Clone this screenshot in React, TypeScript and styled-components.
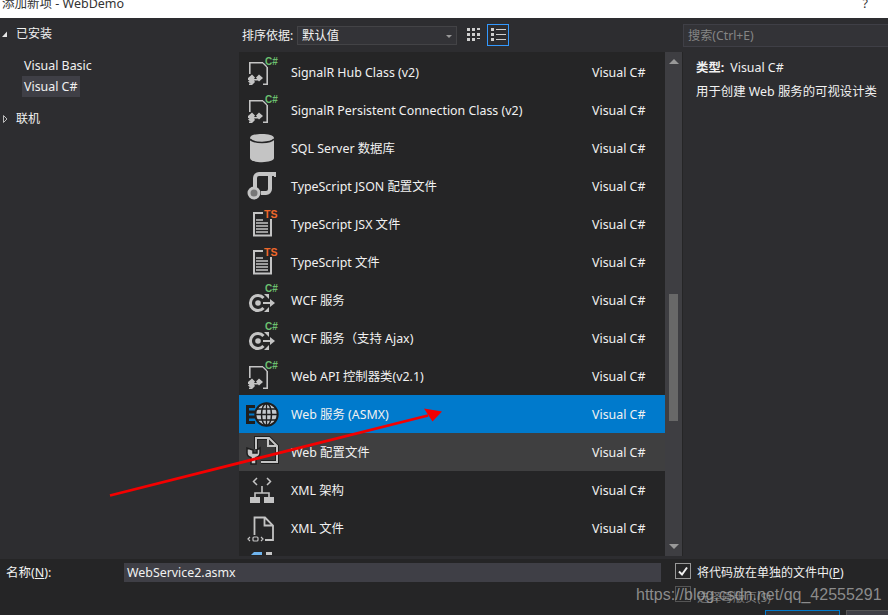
import React from 'react';
import styled, { createGlobalStyle } from 'styled-components';

const GlobalStyle = createGlobalStyle`
	html, body {
		margin: 0;
		padding: 0;
		background: #2d2d30;
		overflow: hidden;
	}
`;

const FONT = `'Noto Sans', 'Noto Sans CJK SC', sans-serif`;

const Dialog = styled.div`
	position: relative;
	width: 888px;
	height: 615px;
	overflow: hidden;
	background: #2d2d30;
	color: #f1f1f1;
	font-family: ${FONT};
	font-size: 12px;
	display: flex;
	flex-direction: column;
`;

const TitleBar = styled.div`
	height: 18px;
	flex: none;
	background: #fff;
	color: #333;
	font-size: 12.5px;
	line-height: 8px;
	display: flex;
	justify-content: space-between;
	padding: 0 20px 0 2px;
	overflow: hidden;
`;

const Main = styled.div`
	height: 538px;
	flex: none;
	display: flex;
`;

const Sidebar = styled.div`
	width: 239px;
	flex: none;
	padding-top: 6px;
`;

const TreeHead = styled.div<{ $top?: number; $gap?: number }>`
	height: 20px;
	line-height: 20px;
	display: flex;
	align-items: center;
	font-size: 12px;
	margin-top: ${(p) => p.$top ?? 0}px;
	margin-bottom: ${(p) => p.$gap ?? 0}px;
`;

const Arrow = styled.svg`
	width: 16px;
	height: 12px;
	flex: none;
`;

const TreeItem = styled.div<{ $active?: boolean }>`
	height: 21px;
	line-height: 21px;
	margin-left: 22px;
	padding-left: 2px;
	width: 56px;
	white-space: nowrap;
	background: ${(p) => (p.$active ? '#3f3f46' : 'transparent')};
	font-size: 12.4px;
`;

const Center = styled.div`
	width: 426px;
	flex: none;
	display: flex;
	flex-direction: column;
`;

const Toolbar = styled.div`
	height: 34px;
	flex: none;
	display: flex;
	align-items: center;
	padding-left: 3px;
`;

const SortLabel = styled.span`
	font-size: 12px;
	width: 55px;
`;

const Select = styled.div`
	width: 154px;
	height: 17px;
	border: 1px solid #434346;
	background: #333337;
	line-height: 17px;
	padding-left: 4px;
	font-size: 12.4px;
	display: flex;
	justify-content: space-between;
	align-items: center;
`;

const SelectCaret = styled.span`
	width: 0;
	height: 0;
	margin: 2px 4px 0 0;
	border-left: 3px solid transparent;
	border-right: 3px solid transparent;
	border-top: 3px solid #999;
`;

const ViewButton = styled.div<{ $active?: boolean }>`
	width: 20px;
	height: 20px;
	margin-left: ${(p) => (p.$active ? '2px' : '6px')};
	border: 1px solid ${(p) => (p.$active ? '#3399ff' : 'transparent')};
	display: flex;
	align-items: center;
	justify-content: center;
`;

const List = styled.div`
	flex: 1;
	background: #252526;
	padding-top: 1px;
	overflow: hidden;
`;

const Row = styled.div<{ $state?: 'selected' | 'hover' }>`
	height: 38px;
	display: flex;
	align-items: center;
	font-size: 12.4px;
	line-height: 18px;
	background: ${(p) =>
		p.$state === 'selected' ? '#007acc' : p.$state === 'hover' ? '#3f3f40' : 'transparent'};
`;

const RowIcon = styled.div`
	width: 52px;
	height: 38px;
	flex: none;
`;

const RowName = styled.span`
	flex: 1;
	padding-top: 2px;
`;

const RowLang = styled.span`
	width: 73px;
	flex: none;
	padding-top: 2px;
`;

const ScrollTrack = styled.div`
	width: 18px;
	flex: none;
	height: 504px;
	align-self: flex-end;
	background: #3e3e42;
	border-right: 1px solid #252526;
	position: relative;
	display: flex;
	flex-direction: column;
	align-items: center;
	justify-content: space-between;
	padding: 7px 0;
	box-sizing: border-box;
`;

const ScrollThumb = styled.div`
	position: absolute;
	left: 4px;
	top: 242px;
	width: 9px;
	height: 127px;
	background: #686868;
`;

const ScrollCap = styled.span<{ $down?: boolean }>`
	width: 0;
	height: 0;
	border-left: 5px solid transparent;
	border-right: 5px solid transparent;
	${(p) => (p.$down ? 'border-top: 5px solid #999;' : 'border-bottom: 5px solid #999;')}
`;

const Details = styled.div`
	flex: 1;
	display: flex;
	flex-direction: column;
`;

const SearchBox = styled.div`
	height: 21px;
	margin-top: 6px;
	border: 1px solid #3f3f46;
	border-right: none;
	background: #333337;
	color: #858585;
	padding-left: 4px;
	line-height: 21px;
	font-size: 12.2px;
`;

const DetailText = styled.div<{ $top?: number }>`
	padding-left: 13px;
	margin-top: ${(p) => p.$top ?? 0}px;
	height: 24px;
	line-height: 24px;
	font-size: 12.4px;
	white-space: nowrap;
`;

const DetailKey = styled.b`
	font-weight: 700;
	margin-right: 6px;
`;

const Footer = styled.div`
	flex: 1;
	background: #252526;
	margin-top: 3px;
	display: flex;
	align-items: flex-start;
	padding: 4px 0 0 6px;
	position: relative;
`;

const NameLabel = styled.span`
	width: 118px;
	flex: none;
	line-height: 19px;
	font-size: 12.5px;
`;

const NameInput = styled.div`
	width: 534px;
	height: 19px;
	flex: none;
	background: #3f3f46;
	line-height: 19px;
	padding-left: 3px;
	font-size: 12.4px;
`;

const Check = styled.div`
	width: 14px;
	height: 14px;
	border: 1px solid #999;
	margin: 0 6px 0 14px;
	flex: none;
	display: flex;
	align-items: center;
	justify-content: center;
`;

const CheckLabel = styled.span`
	line-height: 19px;
	font-size: 12px;
	white-space: nowrap;
`;

const GhostCheck = styled.div`
	position: absolute;
	left: 675px;
	top: 27px;
	width: 14px;
	height: 14px;
	border: 1px solid #555;
`;

const GhostLabel = styled.span`
	position: absolute;
	left: 697px;
	top: 29px;
	color: #777;
	font-size: 12px;
`;

const FooterButton = styled.div<{ $primary?: boolean }>`
	position: absolute;
	top: 51px;
	left: ${(p) => (p.$primary ? '765px' : '846px')};
	width: ${(p) => (p.$primary ? '73px' : '60px')};
	height: 20px;
	background: ${(p) => (p.$primary ? '#333337' : '#3f3f46')};
	border: 1px solid ${(p) => (p.$primary ? '#007acc' : '#555')};
`;

const Watermark = styled.div`
	position: absolute;
	left: 636px;
	top: 586px;
	font-family: 'Liberation Sans', sans-serif;
	font-size: 16px;
	color: rgba(175, 175, 175, 0.75);
	white-space: nowrap;
`;

const Annotation = styled.svg`
	position: absolute;
	left: 0;
	top: 0;
	width: 888px;
	height: 615px;
	pointer-events: none;
`;

const GREY = '#c4c4c4';
const GREEN = '#6cc070';
const ORANGE = '#f0682a';
const INK = '#1e1e1e';

const Sharp = ({ y }: { y: number }) => (
	<text x={26} y={y} fill={GREEN} fontFamily="'Liberation Sans', sans-serif" fontWeight="700" fontSize="10">
		C#
	</text>
);

const FileArrows = () => (
	<svg width="52" height="38" viewBox="0 0 52 38">
		<Sharp y={12} />
		<path d="M24 9.800H10.800V21M28.200 14v17.200H24M10 31.200h3" fill="none" stroke={GREY} strokeWidth="1.600" />
		<path d="M24 10l4 4" stroke={GREY} strokeWidth="1.200" />
		<path d="M9 25l4-3.500 3 3-1 1.500h3l-1-1.500 3-3 4 3.500-4 3.500-1-1h-4l1 1.500-3 3-4-3.500 1.500-1.500h-1.500z" fill={GREY} />
	</svg>
);

const Database = () => (
	<svg width="52" height="38" viewBox="0 0 52 38">
		<path d="M11 9c0-5.500 24-5.500 24 0v20c0 5.500-24 5.500-24 0z" fill={GREY} />
		<path d="M11 10c3 4.500 21 4.500 24 0" fill="none" stroke="#252526" strokeWidth="1.500" />
	</svg>
);

const TsJson = () => (
	<svg width="52" height="38" viewBox="0 0 52 38">
		<path d="M16 22V11a4 4 0 0 1 4-4h16" fill="none" stroke={GREY} strokeWidth="4" />
		<path d="M31 8v14a4 4 0 0 1-4 4h-5" fill="none" stroke={GREY} strokeWidth="4" />
		<path d="M36 5v5" stroke={GREY} strokeWidth="2" />
		<circle cx="15" cy="26" r="5" fill="#777" stroke={GREY} strokeWidth="3" />
	</svg>
);

const TsFile = () => (
	<svg width="52" height="38" viewBox="0 0 52 38">
		<path d="M24 8H15v22.500h17V14" fill="none" stroke={GREY} strokeWidth="2" />
		<path d="M17 15h7M17 18h12M17 21h12M17 24h12M17 27h12" stroke={GREY} strokeWidth="1.500" />
		<text x="25" y="13" fill={ORANGE} fontFamily="'Liberation Sans', sans-serif" fontWeight="700" fontSize="10.500">
			TS
		</text>
	</svg>
);

const Wcf = () => (
	<svg width="52" height="38" viewBox="0 0 52 38">
		<Sharp y={11} />
		<path d="M24.500 17a7.500 7.500 0 1 0 0 10" fill="none" stroke={GREY} strokeWidth="3" />
		<circle cx="19" cy="22" r="2.800" fill={GREY} />
		<path d="M24 22h8" stroke={GREY} strokeWidth="2" />
		<path d="M31 18l5 4-5 4z" fill={GREY} />
		<path d="M25 13h5v5z" fill={GREY} />
		<path d="M25 31h5v-5z" fill={GREY} />
	</svg>
);

const WebService = () => (
	<svg width="52" height="38" viewBox="0 0 52 38">
		<path d="M7 10h9v3H10v2.500h6v3H10v2h6v3H10v2.500h6v3H7z" fill={INK} />
		<circle cx="27.500" cy="19.500" r="11.200" fill="#c4c8cc" stroke={INK} strokeWidth="2" />
		<ellipse cx="27.500" cy="19.500" rx="5" ry="11" fill="none" stroke={INK} strokeWidth="1.500" />
		<path d="M27.500 8.500v22M16.500 19.500h22M18 14h19M18 25h19" stroke={INK} strokeWidth="1.300" />
	</svg>
);

const WebConfig = () => (
	<svg width="52" height="38" viewBox="0 0 52 38">
		<path d="M17 16V5h13l8 8v16H22" fill="#3a3a3b" stroke={INK} strokeWidth="4" />
		<path d="M17 16V5h13l8 8v16H22" fill="none" stroke={GREY} strokeWidth="2" />
		<path d="M29 5v8h9" fill="none" stroke={GREY} strokeWidth="2" />
		<path d="M8 15v5a5 5 0 0 0 4 4.500V31h5v-6.500a5 5 0 0 0 4-4.500v-5l-3 2v3h-4v-3z" fill={GREY} stroke={INK} strokeWidth="1.500" />
	</svg>
);

const XmlSchema = () => (
	<svg width="52" height="38" viewBox="0 0 52 38">
		<path d="M18 7l-3.500 3.500 3.500 3.500M28 7l3.500 3.500-3.500 3.500" fill="none" stroke={GREY} strokeWidth="1.500" />
		<path d="M23 15v7M16 27v-5h14v5" fill="none" stroke={GREY} strokeWidth="1.600" />
		<rect x="11" y="26" width="10" height="6" fill={GREY} />
		<rect x="25" y="26" width="10" height="6" fill={GREY} />
	</svg>
);

const XmlFile = () => (
	<svg width="52" height="38" viewBox="0 0 52 38">
		<path d="M15.500 26V8.500h10.500l8 8V31h-8M25.500 8.500v8H34" fill="none" stroke={GREY} strokeWidth="1.800" />
		<path d="M11 28l-2 2 2 2M22 28l2 2-2 2" fill="none" stroke={GREY} strokeWidth="1.200" />
		<rect x="14" y="28" width="5" height="4" rx="1" fill="none" stroke={GREY} strokeWidth="1.200" />
	</svg>
);

const Clipped = () => (
	<svg width="52" height="38" viewBox="0 0 52 38">
		<path d="M12 8l3-3h8v3z" fill="#6fb4ee" />
		<rect x="27" y="5" width="6" height="3" fill={GREY} />
	</svg>
);

const rows: { name: string; icon: React.ReactNode; state?: 'selected' | 'hover' }[] = [
	{ name: 'SignalR Hub Class (v2)', icon: <FileArrows /> },
	{ name: 'SignalR Persistent Connection Class (v2)', icon: <FileArrows /> },
	{ name: 'SQL Server 数据库', icon: <Database /> },
	{ name: 'TypeScript JSON 配置文件', icon: <TsJson /> },
	{ name: 'TypeScript JSX 文件', icon: <TsFile /> },
	{ name: 'TypeScript 文件', icon: <TsFile /> },
	{ name: 'WCF 服务', icon: <Wcf /> },
	{ name: 'WCF 服务（支持 Ajax)', icon: <Wcf /> },
	{ name: 'Web API 控制器类(v2.1)', icon: <FileArrows /> },
	{ name: 'Web 服务 (ASMX)', icon: <WebService />, state: 'selected' },
	{ name: 'Web 配置文件', icon: <WebConfig />, state: 'hover' },
	{ name: 'XML 架构', icon: <XmlSchema /> },
	{ name: 'XML 文件', icon: <XmlFile /> },
	{ name: '', icon: <Clipped /> },
];

const App = () => {
	return (
		<Dialog>
			<GlobalStyle />
			<TitleBar>
				<span>添加新项 - WebDemo</span>
				<span>?</span>
			</TitleBar>
			<Main>
				<Sidebar>
					<TreeHead $gap={11}>
						<Arrow viewBox="0 0 16 12">
							<path d="M2 9h5V3.500z" fill="#e6e6e6" />
						</Arrow>
						已安装
					</TreeHead>
					<TreeItem>Visual Basic</TreeItem>
					<TreeItem $active>Visual C#</TreeItem>
					<TreeHead $top={12}>
						<Arrow viewBox="0 0 16 12">
							<path d="M3.500 2.500l3.500 3.500-3.500 3.500z" fill="none" stroke="#bbb" />
						</Arrow>
						联机
					</TreeHead>
				</Sidebar>
				<Center>
					<Toolbar>
						<SortLabel>排序依据:</SortLabel>
						<Select>
							默认值
							<SelectCaret />
						</Select>
						<ViewButton>
							<svg width="14" height="14" viewBox="0 0 14 14" fill="#d0d0d0">
								<path d="M0 0h3v3H0zM5 0h3v3H5zM10 0h3v2h-3zM0 5h3v3H0zM5 5h3v3H5zM10 5h3v3h-3zM0 10h3v3H0zM5 10h3v3H5zM10 10h3v1h-3z" />
							</svg>
						</ViewButton>
						<ViewButton $active>
							<svg width="15" height="14" viewBox="0 0 15 14" fill="#d0d0d0">
								<path d="M0 0h3v3H0zM0 5h3v3H0zM0 10h3v3H0zM5 1h10v1H5zM5 6h10v1H5zM5 11h10v1H5z" />
							</svg>
						</ViewButton>
					</Toolbar>
					<List>
						{rows.map((row, i) => (
							<Row key={i} $state={row.state}>
								<RowIcon>{row.icon}</RowIcon>
								<RowName>{row.name}</RowName>
								{row.name && <RowLang>Visual C#</RowLang>}
							</Row>
						))}
					</List>
				</Center>
				<ScrollTrack>
					<ScrollCap />
					<ScrollThumb />
					<ScrollCap $down />
				</ScrollTrack>
				<Details>
					<SearchBox>搜索(Ctrl+E)</SearchBox>
					<DetailText $top={9}>
						<DetailKey>类型:</DetailKey>Visual C#
					</DetailText>
					<DetailText>用于创建 Web 服务的可视设计类</DetailText>
				</Details>
			</Main>
			<Footer>
				<NameLabel>
					名称(<u>N</u>):
				</NameLabel>
				<NameInput>WebService2.asmx</NameInput>
				<Check>
					<svg width="12" height="12" viewBox="0 0 12 12">
						<path d="M2 6.500l3 3 5-7" fill="none" stroke="#f1f1f1" strokeWidth="2" />
					</svg>
				</Check>
				<CheckLabel>
					将代码放在单独的文件中(<u>P</u>)
				</CheckLabel>
				<GhostCheck />
				<GhostLabel>选择母版页(S)</GhostLabel>
				<FooterButton $primary />
				<FooterButton />
			</Footer>
			<Annotation viewBox="0 0 888 615">
				<path d="M110 495.500L428 415.500" stroke="#f40000" strokeWidth="2.800" fill="none" />
				<path d="M442 411.500L424 408.500l4.500 7 4 6z" fill="#f40000" />
			</Annotation>
			<Watermark>https://blog.csdn.net/qq_42555291</Watermark>
		</Dialog>
	);
};

export default App;
